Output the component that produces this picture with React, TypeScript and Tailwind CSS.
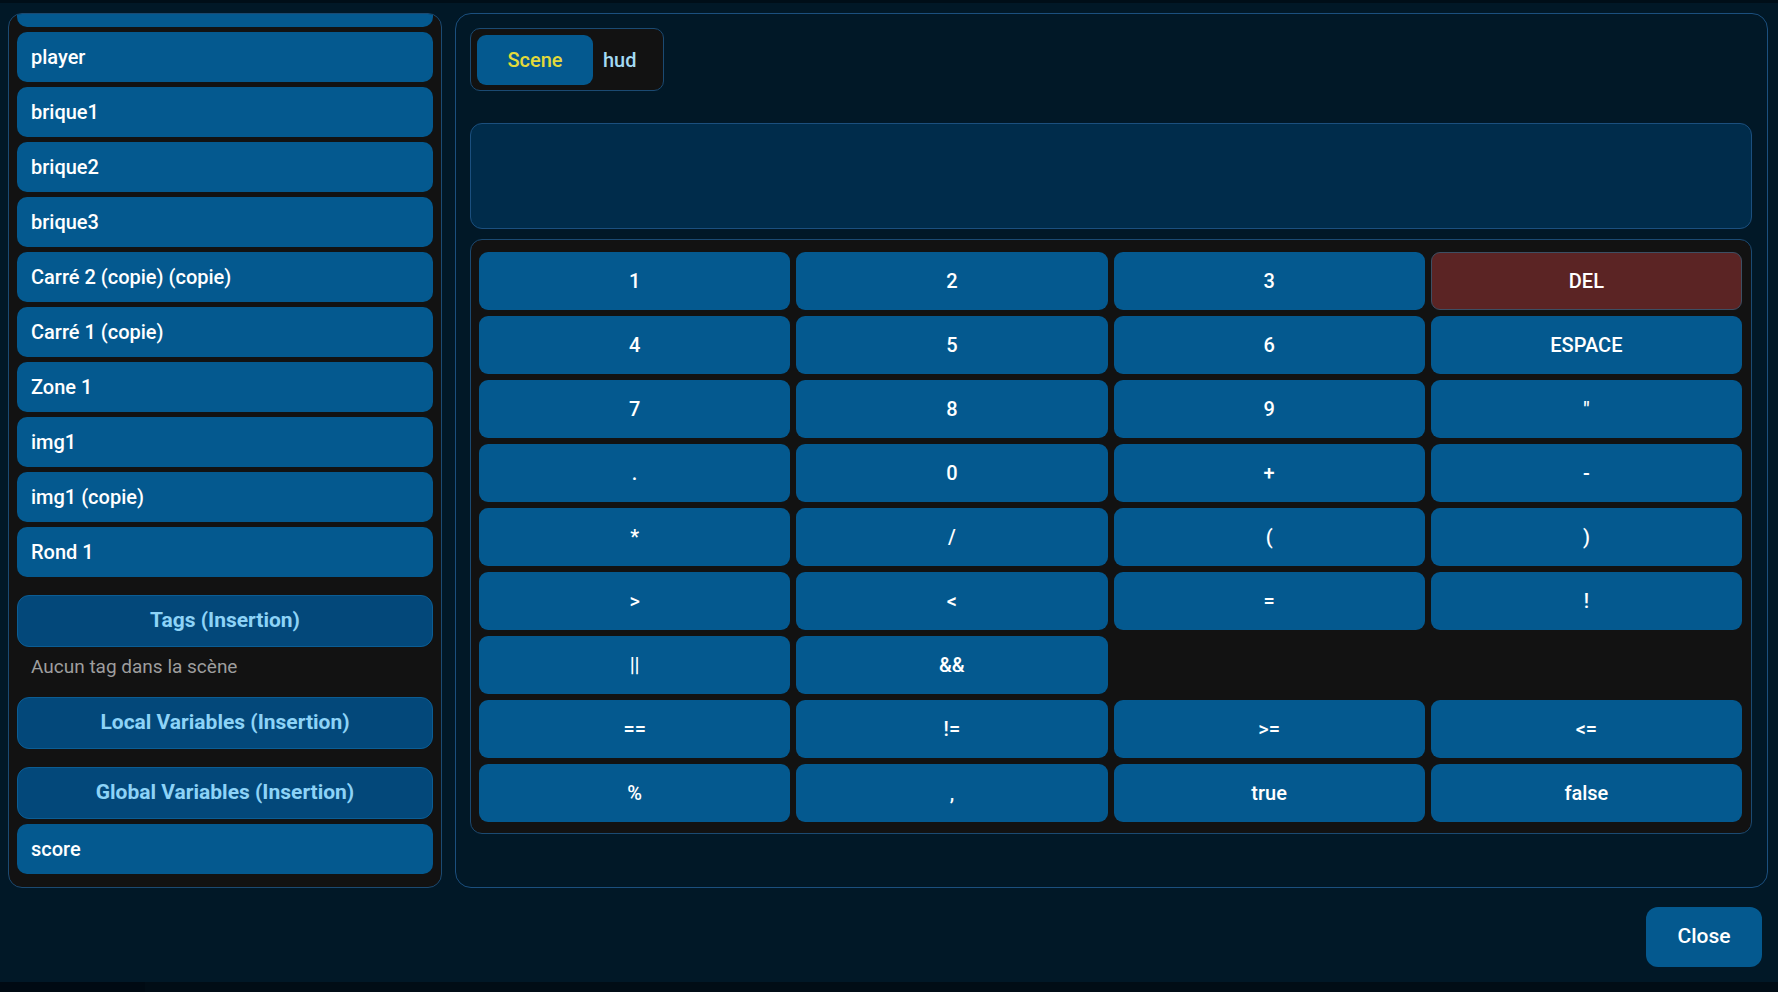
const OBJECTS = [
  '',
  'player',
  'brique1',
  'brique2',
  'brique3',
  'Carré 2 (copie) (copie)',
  'Carré 1 (copie)',
  'Zone 1',
  'img1',
  'img1 (copie)',
  'Rond 1',
]

const KEYS: (string | null)[] = [
  '1', '2', '3', 'DEL',
  '4', '5', '6', 'ESPACE',
  '7', '8', '9', '"',
  '.', '0', '+', '-',
  '*', '/', '(', ')',
  '>', '<', '=', '!',
  '||', '&&', null, null,
  '==', '!=', '>=', '<=',
  '%', ',', 'true', 'false',
]

export default function App() {
  return (
    <div className="flex h-[992px] w-full flex-col overflow-hidden bg-[#011827] font-['Roboto','Liberation_Sans',sans-serif]">
      {/* ── Top strip ── */}
      <div className="h-[3px] shrink-0 bg-[#000e18]" />

      {/* ── Panels ── */}
      <div className="flex shrink-0 gap-[13px] pl-[8px] pt-[10px]">
        {/* Left: objects list */}
        <div className="h-[875px] w-[434px] shrink-0 overflow-hidden rounded-[14px] border border-[#1b4a72] bg-[#121212] px-2">
          <div className="-mt-[37px] flex flex-col">
            <div className="flex flex-col gap-[5px]">
              {OBJECTS.map((name, i) => (
                <ItemButton key={i} label={name} />
              ))}
            </div>

            <SectionButton label="Tags (Insertion)" className="mt-[18px]" />
            <div className="flex h-[40px] items-center px-[14px] text-[19px] text-[#9e9e9e]">
              Aucun tag dans la scène
            </div>
            <SectionButton label="Local Variables (Insertion)" className="mt-[10px]" />
            <SectionButton label="Global Variables (Insertion)" className="mt-[18px]" />
            <div className="mt-[5px]">
              <ItemButton label="score" />
            </div>
          </div>
        </div>

        {/* Right: expression editor */}
        <div className="flex h-[875px] w-[1313px] shrink-0 flex-col rounded-[16px] border border-[#1b4f7e] bg-[#011827] pl-[14px] pr-[15px] pt-[13px]">
          <div className="mt-[1px] flex h-[63px] items-center self-start rounded-[10px] border border-[#1b4a72] bg-[#121212] p-[6px]">
            <button className="h-[50px] w-[116px] rounded-[9px] bg-[#04598f] text-[20px] font-medium text-[#e3da3b]">
              Scene
            </button>
            <button className="h-[50px] pl-[10px] pr-[20px] text-[20px] font-medium text-[#a3daf2]">
              hud
            </button>
          </div>

          <div className="mt-[32px] h-[106px] rounded-[12px] border border-[#1b4f7e] bg-[#002c4b]" />

          <div className="mt-[10px] grid grid-cols-4 gap-[6px] rounded-[12px] border border-[#1b4a72] bg-[#121212] pb-[11px] pl-[8px] pr-[9px] pt-[12px]">
            {KEYS.map((k, i) =>
              k === null ? (
                <div key={i} className="h-[58px]" />
              ) : (
                <button
                  key={i}
                  className={
                    k === 'DEL'
                      ? 'h-[58px] rounded-[9px] border border-[#3d4f63] bg-[#5b2424] text-[20px] font-medium text-white'
                      : 'h-[58px] rounded-[9px] bg-[#04598f] text-[20px] font-medium text-white'
                  }
                >
                  {k}
                </button>
              ),
            )}
          </div>
        </div>
      </div>

      {/* ── Footer ── */}
      <div className="flex shrink-0 justify-end pr-[16px] pt-[19px]">
        <button className="h-[60px] w-[116px] rounded-[12px] bg-[#04598f] text-[21px] font-medium text-white">
          Close
        </button>
      </div>

      <div className="mt-[15px] flex h-[10px] shrink-0">
        <div className="w-[145px] bg-[#000a13]" />
        <div className="flex-1 bg-[#010d16]" />
      </div>
    </div>
  )
}

// ── Helpers ──────────────────────────────────────────────────────────────────

function ItemButton({ label }: { label: string }) {
  return (
    <button className="flex h-[50px] w-full items-center rounded-[10px] bg-[#04598f] px-[14px] text-left text-[20px] font-medium text-white">
      {label}
    </button>
  )
}

function SectionButton({ label, className = '' }: { label: string; className?: string }) {
  return (
    <button
      className={`flex h-[52px] w-full items-center justify-center rounded-[12px] border border-[#0b5d94] bg-[#03487a] text-[21px] font-bold text-[#8dd3f7] ${className}`}
    >
      {label}
    </button>
  )
}
